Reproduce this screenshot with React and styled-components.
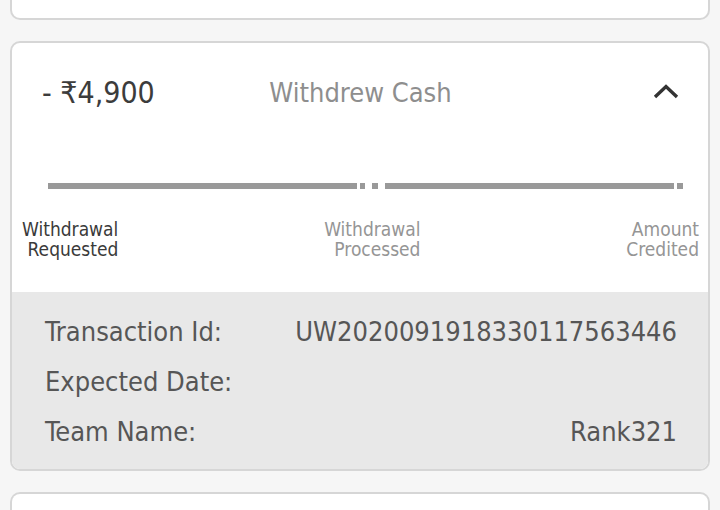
import React from 'react';
import styled, { createGlobalStyle } from 'styled-components';

const GlobalStyle = createGlobalStyle`
    body {
        margin:0;
        background:#f6f6f6;
        font-family:"DejaVu Sans Condensed", "DejaVu Sans", sans-serif;
        font-stretch:condensed;
    }
`;

const Page = styled.div`
    display:flex;
    flex-direction:column;
    gap:21px;
    padding:0 10px;
`;

const StubCard = styled.div`
    height:18px;
    background:#fff;
    border:2px solid #d6d6d6;
    border-top:none;
    border-radius:0 0 10px 10px;
`;

const Card = styled.div`
    background:#fff;
    border:2px solid #d6d6d6;
    border-radius:10px;
    overflow:hidden;
    ${({ stub }) => stub && 'height:30px; border-bottom:none; border-radius:10px 10px 0 0;'}
`;

const Header = styled.div`
    display:grid;
    grid-template-columns:1fr auto 1fr;
    align-items:center;
    height:98px;
    padding:0 29px 0 30px;
`;

const Amount = styled.div`
    font-size:30px;
    color:#3c3c3c;
`;

const Title = styled.div`
    font-size:27px;
    color:#8e8e8e;
`;

const Toggle = styled.div`
    justify-self:end;
    display:flex;
    color:#333;
`;

const Tracker = styled.div`
    padding:42px 0 0;
`;

const Track = styled.div`
    display:flex;
    align-items:center;
    padding:0 25px 0 36px;
`;

const Segment = styled.div`
    height:6px;
    width:${({ w }) => w}px;
    background:#999;
`;

const Dot = styled.div`
    width:6px;
    height:6px;
    background:#999;
    margin-left:${({ gap }) => gap}px;
    margin-right:${({ after }) => after || 0}px;
`;

const Steps = styled.div`
    display:flex;
    justify-content:space-between;
    padding:30px 9px 33px 10px;
`;

const Step = styled.div`
    text-align:right;
    font-size:19px;
    line-height:20px;
    color:${({ done }) => (done ? '#3a3a3a' : '#959595')};
`;

const Details = styled.div`
    background:#e8e8e8;
    padding:14px 31px 13px 33px;
`;

const Row = styled.div`
    display:flex;
    justify-content:space-between;
    align-items:center;
    height:50px;
    font-size:27px;
    color:#565656;
`;

const steps = [
    ['Withdrawal', 'Requested', true],
    ['Withdrawal', 'Processed', false],
    ['Amount', 'Credited', false],
];

const rows = [
    ['Transaction Id:', 'UW2020091918330117563446'],
    ['Expected Date:', ''],
    ['Team Name:', 'Rank321'],
];

const App = () => {
    return (
        <>
            <GlobalStyle />
            <Page>
                <StubCard />
                <Card>
                    <Header>
                        <Amount>- ₹4,900</Amount>
                        <Title>Withdrew Cash</Title>
                        <Toggle>
                            <svg width="26" height="16" viewBox="0 0 26 16">
                                <path d="M2 13 L13 2.5 L24 13" fill="none" stroke="currentColor" strokeWidth="3.4" />
                            </svg>
                        </Toggle>
                    </Header>
                    <Tracker>
                        <Track>
                            <Segment w={309} />
                            <Dot gap={3} />
                            <Dot gap={7} after={7} />
                            <Segment w={289} />
                            <Dot gap={3} />
                        </Track>
                        <Steps>
                            {steps.map(([a, b, done], i) => (
                                <Step done={done} key={i}>
                                    {a}<br />{b}
                                </Step>
                            ))}
                        </Steps>
                    </Tracker>
                    <Details>
                        {rows.map(([label, value]) => (
                            <Row key={label}>
                                <span>{label}</span>
                                <span>{value}</span>
                            </Row>
                        ))}
                    </Details>
                </Card>
                <Card stub />
            </Page>
        </>
    );
};

export default App;
